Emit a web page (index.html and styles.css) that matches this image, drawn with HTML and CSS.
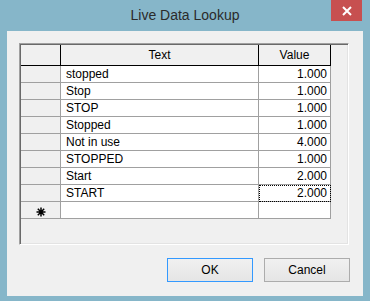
FILE: index.html
```html
<!DOCTYPE html>
<html lang="en">
<head>
    <meta charset="UTF-8">
    <title>Live Data Lookup</title>
    <link rel="stylesheet" href="styles.css">
</head>
<body>
    <div class="window">
        <div class="titlebar">
            <span></span>
            <div class="title">Live Data Lookup</div>
            <div class="close">
                <svg width="10" height="10" viewBox="0 0 10 10">
                    <path d="M1 1 L9 9 M9 1 L1 9" stroke="#fff" stroke-width="2"/>
                </svg>
            </div>
        </div>

        <div class="client">
            <!-- lookup grid -->
            <div class="grid-box">
                <table class="grid">
                    <tr class="head">
                        <th class="rowhead"></th>
                        <th class="col-text">Text</th>
                        <th class="col-value">Value</th>
                    </tr>
                    <tr><td class="rowhead"></td><td>stopped</td><td class="num">1.000</td></tr>
                    <tr><td class="rowhead"></td><td>Stop</td><td class="num">1.000</td></tr>
                    <tr><td class="rowhead"></td><td>STOP</td><td class="num">1.000</td></tr>
                    <tr><td class="rowhead"></td><td>Stopped</td><td class="num">1.000</td></tr>
                    <tr><td class="rowhead"></td><td>Not in use</td><td class="num">4.000</td></tr>
                    <tr><td class="rowhead"></td><td>STOPPED</td><td class="num">1.000</td></tr>
                    <tr><td class="rowhead"></td><td>Start</td><td class="num">2.000</td></tr>
                    <tr><td class="rowhead"></td><td>START</td><td class="num focus">2.000</td></tr>
                    <tr>
                        <td class="rowhead new">
                            <svg width="10" height="10" viewBox="0 0 10 10">
                                <path d="M5 0.5 V9.5 M0.5 5 H9.5 M1.8 1.8 L8.2 8.2 M8.2 1.8 L1.8 8.2" stroke="#000" stroke-width="1.5"/>
                            </svg>
                        </td>
                        <td></td>
                        <td></td>
                    </tr>
                </table>
            </div>

            <div class="buttons">
                <button class="btn default">OK</button>
                <button class="btn">Cancel</button>
            </div>
        </div>
    </div>
</body>
</html>
```

FILE: styles.css
```css
body {
    margin: 0;
    background-color: #86b6c9;
    font-family: 'Liberation Sans', Arial, sans-serif;
    font-size: 12px;
    color: #000;
}
.window {
    width: 370px;
    height: 301px;
    overflow: hidden;
}

/* title bar */
.titlebar {
    height: 31px;
    display: grid;
    grid-template-columns: 1fr auto 1fr;
    align-items: start;
}
.title {
    font-size: 14px;
    color: #2b2b2b;
    line-height: 30px;
}
.close {
    justify-self: end;
    margin-right: 8px;
    width: 31px;
    height: 21px;
    background-color: #c75050;
    display: flex;
    justify-content: center;
    align-items: center;
}

/* client area */
.client {
    margin: 0 7px;
    height: 265px;
    background-color: #f0f0f0;
    padding-top: 12px;
    box-sizing: border-box;
}
.grid-box {
    margin-left: 12px;
    width: 330px;
    height: 202px;
    box-sizing: border-box;
    border: 1px solid;
    border-color: #a0a0a0 #fff #fff #a0a0a0;
    box-shadow: inset 1px 1px 0 #696969, inset -1px -1px 0 #e3e3e3;
    padding: 1px;
}
.grid {
    border-collapse: separate;
    border-spacing: 0;
    table-layout: fixed;
    width: 310px;
}
.grid th,
.grid td {
    box-sizing: border-box;
    padding: 0;
    border-right: 1px solid #a0a0a0;
    border-bottom: 1px solid #a0a0a0;
    line-height: 16px;
    height: 17px;
    white-space: nowrap;
    overflow: hidden;
}
.grid td {
    background-color: #fff;
    padding-left: 5px;
}
.grid .head th {
    font-weight: normal;
    background-color: #f0f0f0;
    border-color: #000;
    line-height: 20px;
    height: 21px;
    text-align: center;
}
.grid .rowhead {
    width: 40px;
}
.grid td.rowhead {
    background-color: #f0f0f0;
    padding: 0;
}
.col-text {
    width: 198px;
}
.col-value {
    width: 72px;
}
.grid td.num {
    text-align: right;
    padding: 0 3px 0 0;
}
.grid td.focus {
    outline: 1px dotted #000;
    outline-offset: -1px;
}
.grid td.new svg {
    display: block;
    margin: 3px auto 0;
}

/* buttons */
.buttons {
    display: flex;
    justify-content: flex-end;
    gap: 11px;
    margin-top: 13px;
    padding-right: 13px;
}
.btn {
    width: 86px;
    height: 24px;
    font-family: 'Liberation Sans', Arial, sans-serif;
    font-size: 12px;
    color: #000;
    background: linear-gradient(#f0f0f0, #e5e5e5);
    border: 1px solid #acacac;
    padding: 0;
}
.btn.default {
    border-color: #3399ff;
}
```
